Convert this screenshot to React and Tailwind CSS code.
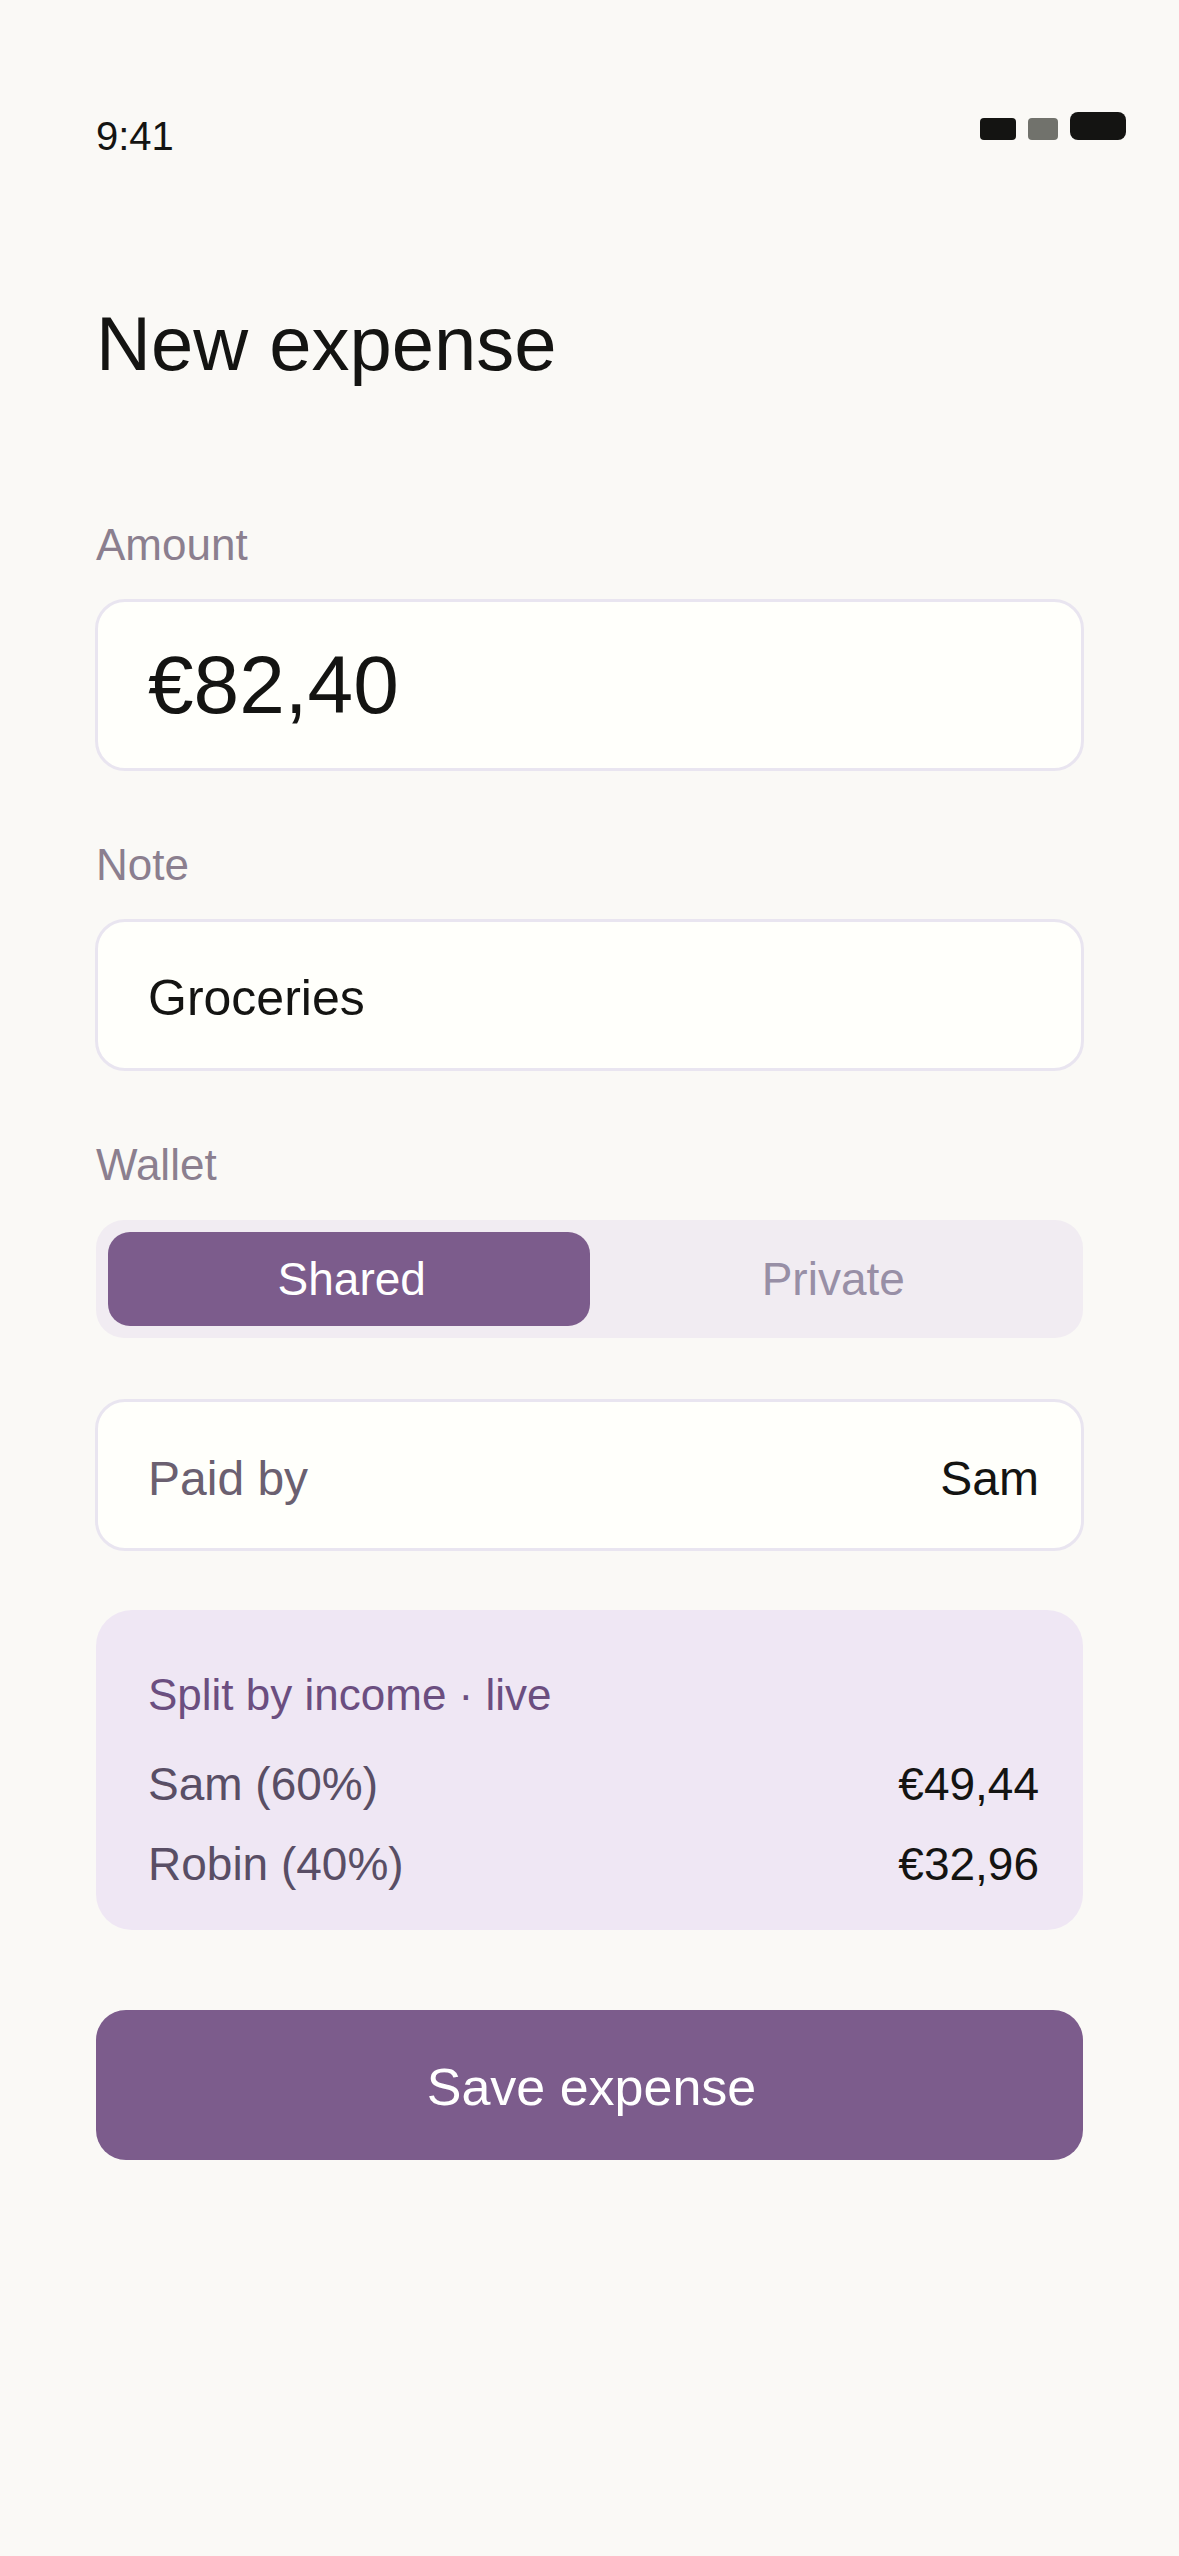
import { useState } from "react";

const FIELD =
  "w-full rounded-[29px] bg-[#fffffb] pl-[52px] pr-11 text-[#141412] outline-3 -outline-offset-2 outline-[#e9e5f0]";
const LABEL = "mb-[27px] block text-[44px] leading-[56px] text-[#8b7f8f]";

const shares = [
  { name: "Sam (60%)", amount: "€49,44" },
  { name: "Robin (40%)", amount: "€32,96" },
];

function StatusBar() {
  return (
    <header className="flex items-start justify-between pt-28 pl-24 pr-[53px]">
      <time className="text-[40px] leading-[48px]">9:41</time>
      <div className="flex items-end gap-3" aria-hidden="true">
        <span className="h-[22px] w-9 rounded-[4px] bg-[#141412]" />
        <span className="h-[22px] w-[30px] rounded-[4px] bg-[#71726c]" />
        <span className="h-7 w-14 rounded-[8px] bg-[#141412]" />
      </div>
    </header>
  );
}

function WalletToggle() {
  const [wallet, setWallet] = useState("Shared");
  return (
    <div
      role="group"
      aria-labelledby="wallet-label"
      className="grid grid-cols-2 rounded-[28px] bg-[#f1ecf2] p-3"
    >
      {["Shared", "Private"].map((name) => (
        <button
          key={name}
          type="button"
          aria-pressed={wallet === name}
          onClick={() => setWallet(name)}
          className={
            "h-[94px] rounded-[22px] pl-1.5 text-[46px] " +
            (wallet === name ? "bg-[#7c5c8c] text-white" : "text-[#988fa6]")
          }
        >
          {name}
        </button>
      ))}
    </div>
  );
}

export default function App() {
  return (
    <div className="min-h-screen bg-[#faf9f6] pb-24 font-['Liberation_Sans',Arial,sans-serif] text-[#141412]">
      <StatusBar />
      <main className="px-24">
        <h1 className="mt-[140px] text-[76px] leading-[88px]">New expense</h1>
        <form onSubmit={(e) => e.preventDefault()}>
          <div className="mt-[129px]">
            <label htmlFor="amount" className={LABEL}>
              Amount
            </label>
            <input
              id="amount"
              type="text"
              inputMode="decimal"
              defaultValue="€82,40"
              className={FIELD + " block h-[170px] text-[82px]"}
            />
          </div>

          <div className="mt-[67px]">
            <label htmlFor="note" className={LABEL}>
              Note
            </label>
            <input
              id="note"
              type="text"
              defaultValue="Groceries"
              className={FIELD + " block h-[150px] pt-1.5 text-[50px]"}
            />
          </div>

          <div className="mt-[67px]">
            <span id="wallet-label" className={LABEL}>
              Wallet
            </span>
            <WalletToggle />
          </div>

          <div
            className={
              FIELD +
              " mt-[62px] flex h-[150px] items-center justify-between pt-2 text-[48px]"
            }
          >
            <label htmlFor="payer" className="text-[#6b6070]">
              Paid by
            </label>
            <select
              id="payer"
              className="appearance-none bg-transparent text-right outline-none"
            >
              <option>Sam</option>
            </select>
          </div>

          <section className="mt-[60px] rounded-[36px] bg-[#efe7f4] pt-[57px] pr-11 pb-[26px] pl-[52px]">
            <h2 className="mb-[21px] text-[44px] leading-[56px] text-[#6b4e80]">
              Split by income · live
            </h2>
            <dl className="text-[46px] leading-[80px]">
              {shares.map((share) => (
                <div key={share.name} className="flex justify-between">
                  <dt className="text-[#594e65]">{share.name}</dt>
                  <dd>{share.amount}</dd>
                </div>
              ))}
            </dl>
          </section>

          <button
            type="submit"
            className="mt-20 block h-[150px] w-full rounded-[30px] bg-[#7c5c8c] pt-1 pl-1 text-[52px] text-white"
          >
            Save expense
          </button>
        </form>
      </main>
    </div>
  );
}
